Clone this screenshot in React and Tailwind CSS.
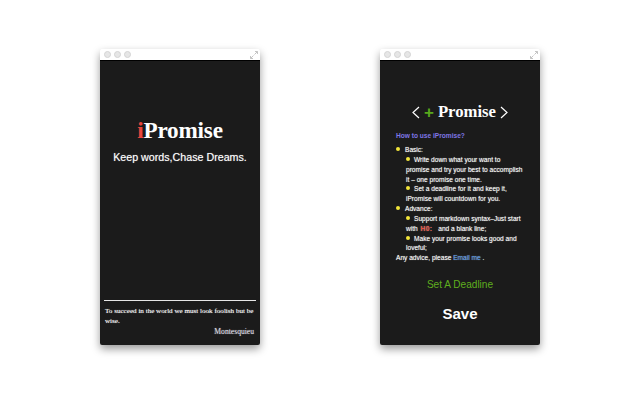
const sans = { fontFamily: '"Liberation Sans", Arial, sans-serif' };

function TitleBar() {
  return (
    <div className="h-[11px] bg-white rounded-t-[3px] flex items-center justify-between pl-[4px] pr-[2px] shrink-0">
      <div className="flex gap-[3.5px]">
        <span className="w-[6.5px] h-[6.5px] rounded-full bg-[#e6e6e6] border border-[#d4d4d4]" />
        <span className="w-[6.5px] h-[6.5px] rounded-full bg-[#e6e6e6] border border-[#d4d4d4]" />
        <span className="w-[6.5px] h-[6.5px] rounded-full bg-[#e6e6e6] border border-[#d4d4d4]" />
      </div>
      <svg width="8" height="8" viewBox="0 0 8 8" fill="none" stroke="#c4c4c4" strokeWidth="1">
        <path d="M4.5 3.5 L7.5 0.5 M5 0.5 H7.5 V3 M3.5 4.5 L0.5 7.5 M0.5 5 V7.5 H3" />
      </svg>
    </div>
  );
}

function Window({ children }) {
  return (
    <div className="w-40 h-[296px] flex flex-col rounded-[3px] shadow-[0_4px_9px_rgba(0,0,0,0.4)]">
      <TitleBar />
      <div className="flex-1 bg-[#1b1b1b] border-t border-black rounded-b-[2px] flex flex-col min-h-0">{children}</div>
    </div>
  );
}

function Dot({ className }) {
  return <span className={`inline-block w-[4px] h-[4px] rounded-full bg-[#f2e63a] align-[1px] ${className}`} />;
}

export default function App() {
  return (
    <div className="w-[640px] h-[400px] bg-white flex justify-center gap-[120px] pt-[49px] overflow-hidden">
      <Window>
        <div className="flex-1 flex flex-col items-center pt-[55px] font-['Liberation_Serif',serif]">
          <h1 className="text-[23.2px] leading-[28px] font-bold text-white tracking-[-0.2px]">
            <span className="text-[#e8453c]">i</span>Promise
          </h1>
          <p className="mt-[5px] text-[10.7px] leading-[16px] text-white [text-shadow:0_0_1px_rgba(255,255,255,0.5)]" style={sans}>Keep words,Chase Dreams.</p>
        </div>
        <div className="mx-[4px] mb-[8.5px] border-t border-[#e6e6e6] pt-[6px] px-[1px] font-['Liberation_Serif',serif] text-[7.1px] leading-[9.5px] text-white [text-shadow:0_0_1px_rgba(255,255,255,0.6)]">
          <p>To succeed in the world we must look foolish but be wise.</p>
          <p className="mt-[1px] text-right pr-[1px] text-[7.6px] text-[#d8d8e0]">Montesquieu</p>
        </div>
      </Window>
      <Window>
        <div className="flex-1 flex flex-col" style={sans}>
          <div className="mt-[40px] flex items-center justify-center h-[22px] text-white">
            <svg width="8" height="13" viewBox="0 0 8 13" fill="none" stroke="#ffffff" strokeWidth="1.2"><path d="M7 1 L1 6.5 L7 12" /></svg>
            <span className="ml-[4px] text-[17px] font-bold text-[#58a81c] leading-none">+</span>
            <span className="ml-[4px] font-['Liberation_Serif',serif] text-[16.7px] font-bold">Promise</span>
            <svg className="ml-[4px]" width="8" height="13" viewBox="0 0 8 13" fill="none" stroke="#ffffff" strokeWidth="1.2"><path d="M1 1 L7 6.5 L1 12" /></svg>
          </div>
          <h2 className="mt-[8px] ml-4 text-[6.6px] leading-[10px] font-bold text-[#7f76e6]">How to use iPromise?</h2>
          <div className="mt-[4px] pl-4 pr-[15px] text-[6.6px] leading-[9.85px] text-white [text-shadow:0_0_1px_rgba(255,255,255,0.6)]">
            <div><Dot className="mr-[5px]" />Basic:</div>
            <div className="pl-[10px]">
              <div><Dot className="mr-[4px]" />Write down what your want to promise and try your best to accomplish it – one promise one time.</div>
              <div><Dot className="mr-[4px]" />Set a deadline for it and keep it, iPromise will countdown for you.</div>
            </div>
            <div><Dot className="mr-[5px]" />Advance:</div>
            <div className="pl-[10px]">
              <div><Dot className="mr-[4px]" />Support markdown syntax–Just start with <span className="ml-[1px] mr-[4px] tracking-[0.4px] text-[#e8503a] font-bold">H0:</span> and a blank line;</div>
              <div><Dot className="mr-[4px]" />Make your promise looks good and loveful;</div>
            </div>
            <div>Any advice, please <span className="text-[#4f9aee]">Email me</span> .</div>
          </div>
          <p className="mt-[15px] text-center text-[10.1px] leading-[14px] text-[#5fae1e]">Set A Deadline</p>
          <p className="mt-[13px] text-center text-[15px] leading-[18px] font-bold text-white">Save</p>
        </div>
      </Window>
    </div>
  );
}
